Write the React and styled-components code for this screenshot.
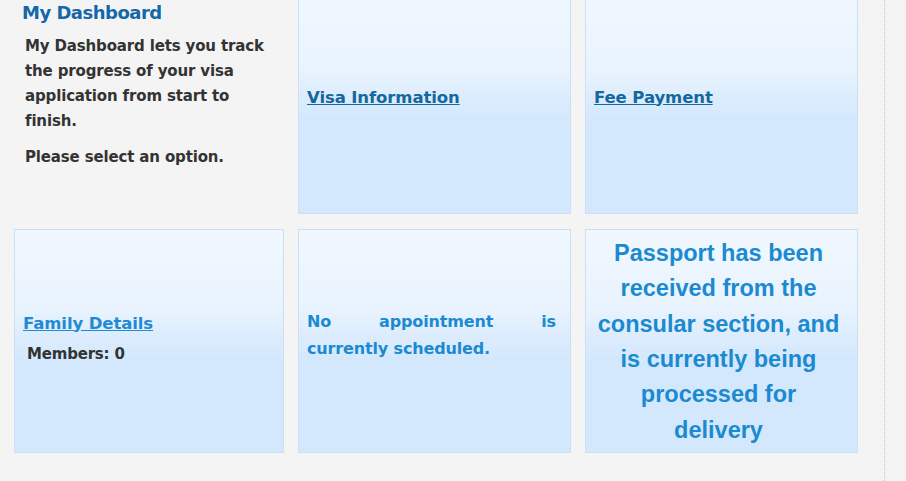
import React from "react";
import styled, { createGlobalStyle } from "styled-components";

const GlobalStyle = createGlobalStyle`
  html, body {
    margin: 0;
    padding: 0;
    background: #f4f4f4;
    overflow: hidden;
  }
`;

const Page = styled.div`
  width: 885px;
  height: 481px;
  border-right: 1px dotted #c4c4c4;
  box-sizing: border-box;
  font-family: "DejaVu Sans", Verdana, sans-serif;
  overflow: hidden;
`;

const Grid = styled.div`
  display: grid;
  grid-template-columns: 270px 273px 273px;
  grid-template-rows: 224px 224px;
  column-gap: 14px;
  row-gap: 15px;
  padding-left: 14px;
  margin-top: -10px;
`;

const Intro = styled.div`
  padding: 10px 8px 0 8px;
`;

const Heading = styled.h2`
  margin: 0;
  font-size: 18px;
  line-height: 26px;
  font-weight: bold;
  color: #1467a8;
  letter-spacing: -0.5px;
`;

const IntroText = styled.p`
  margin: ${(p) => p.$gap || "0"} 0 0 3px;
  font-size: 15px;
  line-height: 25px;
  font-weight: bold;
  color: #333333;
  letter-spacing: -0.15px;
`;

const Card = styled.div`
  box-sizing: border-box;
  border: 1px solid #c8e0f8;
  background: linear-gradient(
    to bottom,
    #f0f7ff 0%,
    #eaf4fe 34%,
    #dcecfd 48%,
    #d4e8fd 58%,
    #d4e8fd 100%
  );
  display: flex;
  flex-direction: column;
  justify-content: center;
  padding: ${(p) => p.$top || "0"} 8px ${(p) => p.$bottom || "0"};
`;

const CardLink = styled.a`
  font-size: 16.5px;
  line-height: 24px;
  font-weight: bold;
  color: ${(p) => p.$color || "#1368a0"};
  text-decoration: underline;
  letter-spacing: -0.1px;
  cursor: pointer;
`;

const Members = styled.div`
  margin: 7px 0 0 4px;
  font-size: 15px;
  line-height: 22px;
  font-weight: bold;
  color: #333333;
  letter-spacing: -0.2px;
`;

const Notice = styled.p`
  margin: 0 6px 0 0;
  font-size: 16px;
  line-height: 27px;
  font-weight: bold;
  color: #1b8ad0;
  text-align: justify;
  letter-spacing: -0.15px;
`;

const Status = styled.p`
  margin: 0 8px 0 2px;
  font-family: "Liberation Sans", Arial, sans-serif;
  font-size: 23.5px;
  line-height: 35.3px;
  font-weight: bold;
  color: #1b8ad0;
  text-align: center;
`;

export default function App() {
  return (
    <>
      <GlobalStyle />
      <Page>
        <Grid>
          <Intro>
            <Heading>My Dashboard</Heading>
            <IntroText $gap="8px">
              My Dashboard lets you track the progress of your visa
              application from start to finish.
            </IntroText>
            <IntroText $gap="11px">Please select an option.</IntroText>
          </Intro>
          <Card $bottom="9px">
            <div>
              <CardLink>Visa Information</CardLink>
            </div>
          </Card>
          <Card $bottom="9px">
            <div>
              <CardLink>Fee Payment</CardLink>
            </div>
          </Card>
          <Card $bottom="6px">
            <div>
              <CardLink $color="#1f8bd4">Family Details</CardLink>
            </div>
            <Members>Members: 0</Members>
          </Card>
          <Card $bottom="12px">
            <Notice>No appointment is currently scheduled.</Notice>
          </Card>
          <Card $top="2px">
            <Status>
              Passport has been received from the consular section, and is
              currently being processed for delivery
            </Status>
          </Card>
        </Grid>
      </Page>
    </>
  );
}
